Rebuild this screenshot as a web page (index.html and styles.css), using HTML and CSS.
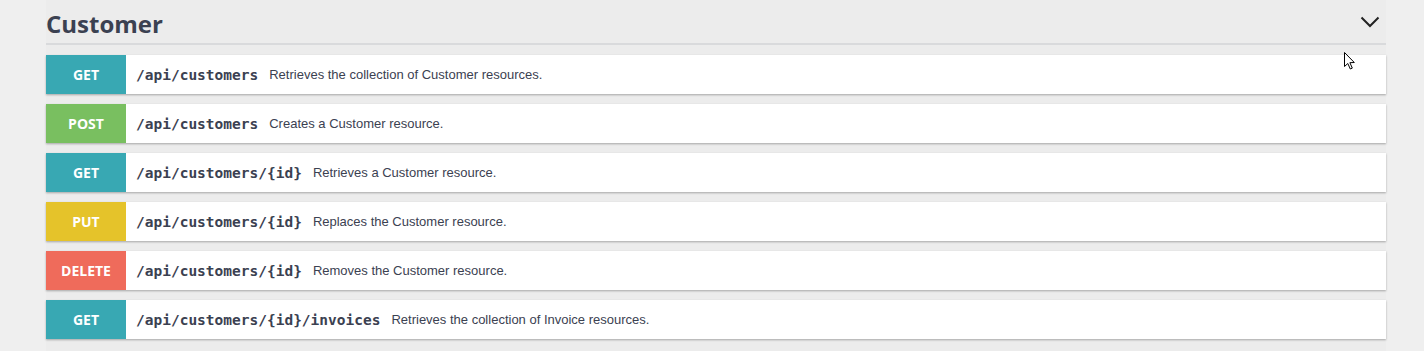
FILE: index.html
```html
<!DOCTYPE html>
<html>
<head>
<meta charset="utf-8">
<link rel="stylesheet" href="styles.css">
</head>
<body>
<div class="page">
  <section class="tag">
    <div class="tag-header">
      <h4 class="tag-title">Customer</h4>
      <svg class="chevron" width="20" height="12" viewBox="0 0 20 12"><path d="M1.5 1.5 L10 10 L18.5 1.5" fill="none" stroke="#222" stroke-width="2"/></svg>
    </div>
    <div class="ops">
      <div class="op"><span class="method get">GET</span><span class="path">/api/customers</span><span class="desc">Retrieves the collection of Customer resources.</span></div>
      <div class="op"><span class="method post">POST</span><span class="path">/api/customers</span><span class="desc">Creates a Customer resource.</span></div>
      <div class="op"><span class="method get">GET</span><span class="path">/api/customers/{id}</span><span class="desc">Retrieves a Customer resource.</span></div>
      <div class="op"><span class="method put">PUT</span><span class="path">/api/customers/{id}</span><span class="desc">Replaces the Customer resource.</span></div>
      <div class="op"><span class="method delete">DELETE</span><span class="path">/api/customers/{id}</span><span class="desc">Removes the Customer resource.</span></div>
      <div class="op"><span class="method get">GET</span><span class="path">/api/customers/{id}/invoices</span><span class="desc">Retrieves the collection of Invoice resources.</span></div>
    </div>
  </section>
  <svg class="cursor" width="14" height="20" viewBox="0 0 14 20"><path d="M1.5 1.5 L1.5 15.5 L4.8 12.5 L7.3 18 L9.3 17.1 L6.9 11.7 L11.3 11.5 Z" fill="#fff" stroke="#000" stroke-width="1" stroke-linejoin="miter"/></svg>
</div>
</body>
</html>
```
FILE: styles.css
```css
html, body {
  margin: 0;
  padding: 0;
  background: #efefef;
}
.page {
  position: relative;
  padding: 0 38px 0 46px;
  height: 351px;
  overflow: hidden;
}
.tag {
  background: #ececec;
  height: 351px;
}
.tag-header {
  display: flex;
  align-items: center;
  justify-content: space-between;
  height: 43px;
  border-bottom: 2px solid #d9dadc;
}
.tag-title {
  margin: 0;
  font-family: "Open Sans", sans-serif;
  font-weight: 700;
  font-size: 24px;
  line-height: 30px;
  color: #3b4151;
  padding-top: 4px;
}
.chevron {
  margin-right: 6px;
}
.ops {
  display: flex;
  flex-direction: column;
  gap: 10px;
  padding-top: 10px;
}
.op {
  display: flex;
  align-items: center;
  height: 39px;
  background: #fff;
  box-shadow: 0 1px 2px rgba(0, 0, 0, 0.3);
}
.method {
  width: 80px;
  height: 100%;
  display: flex;
  align-items: center;
  justify-content: center;
  color: #fff;
  font-family: "Open Sans", sans-serif;
  font-weight: 700;
  font-size: 14px;
}
.get { background: #38a8b3; }
.post { background: #79bf60; }
.put { background: #e5c32a; }
.delete { background: #ef6b5b; }
.path {
  padding-left: 10px;
  font-family: "DejaVu Sans Mono", monospace;
  font-weight: 700;
  font-size: 14.5px;
  color: #3b4151;
}
.desc {
  padding-left: 11px;
  font-family: "Liberation Sans", Arial, sans-serif;
  font-size: 13px;
  color: #3b4151;
}
.cursor {
  position: absolute;
  left: 1343px;
  top: 51px;
}
```
